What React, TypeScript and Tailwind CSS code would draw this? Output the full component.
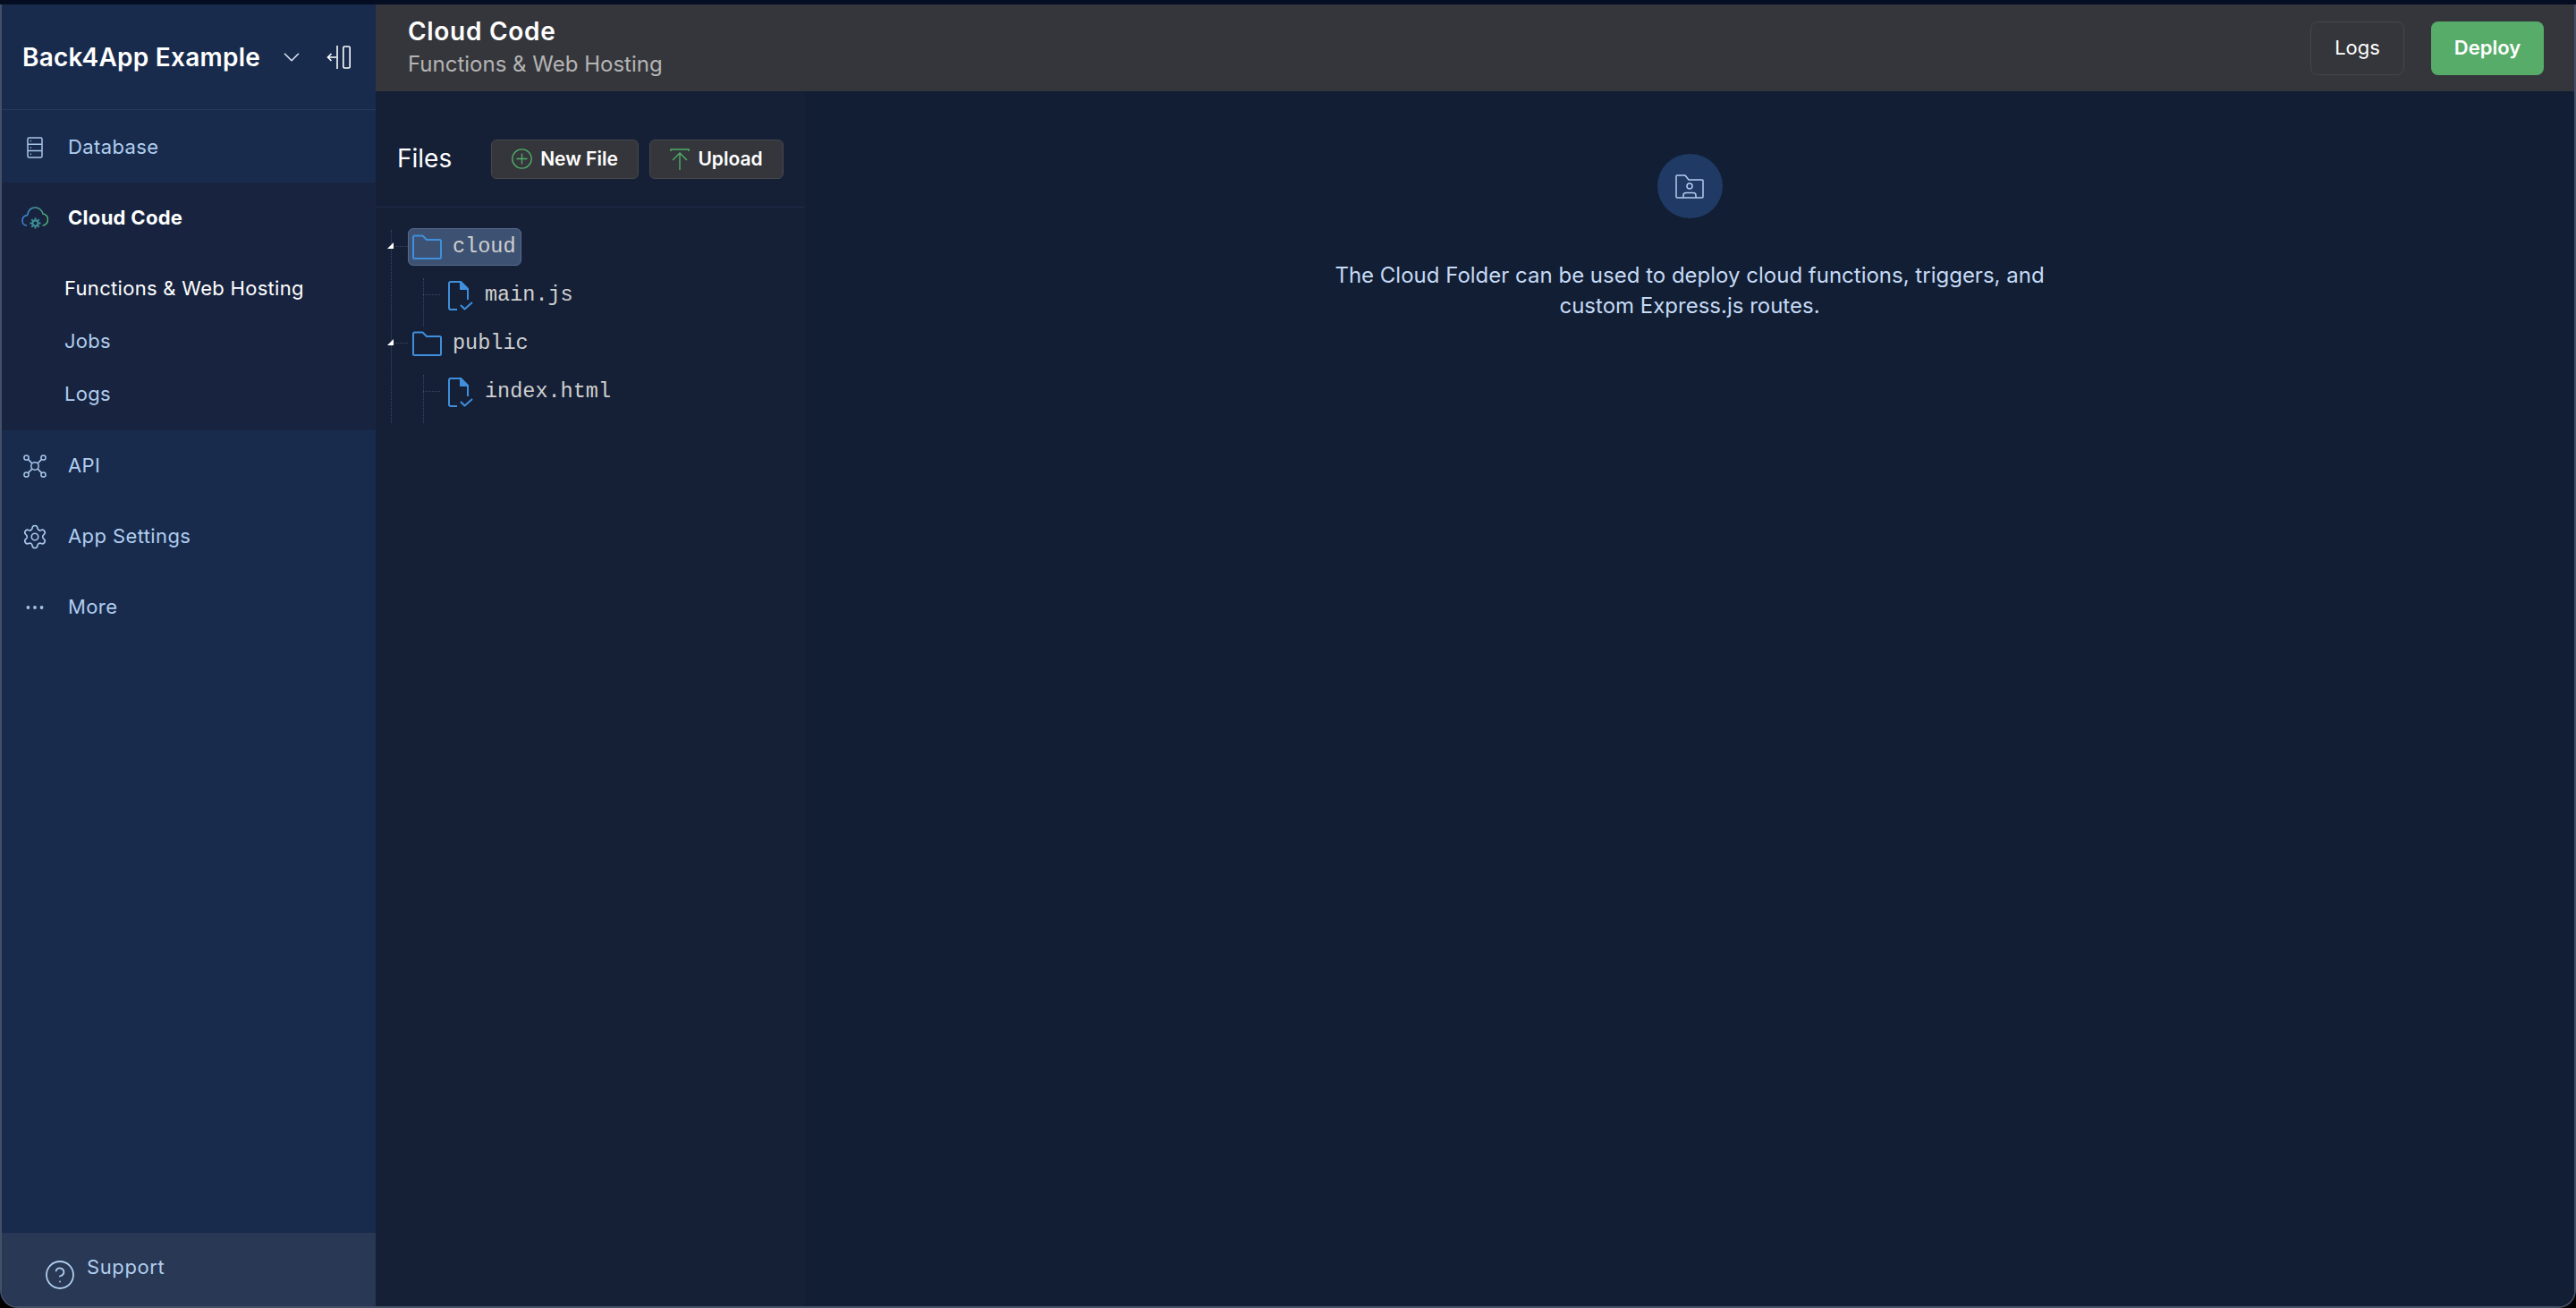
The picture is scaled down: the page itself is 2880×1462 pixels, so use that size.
import React from 'react';
import { ChevronDown, CircleHelp, Ellipsis, Settings } from 'lucide-react';

const sora = "font-['Inter','Noto_Sans',sans-serif]";

const DatabaseIcon = () => (
  <svg width="18" height="24" viewBox="0 0 18 24" fill="none" stroke="#a8c6ea" strokeWidth="1.5">
    <rect x="1" y="1" width="16" height="22" rx="1.5" />
    <path d="M1 8.300h16M1 15.600h16M4 4.600h1M4 12h1M4 19.300h1" />
  </svg>
);

const CloudGearIcon = () => (
  <svg width="30" height="25" viewBox="0 0 30 25" fill="none" strokeWidth="1.600">
    <defs>
      <linearGradient id="cg" x1="0" y1="0" x2="1" y2="0">
        <stop offset="0" stopColor="#3b82d6" />
        <stop offset="1" stopColor="#4fae6b" />
      </linearGradient>
    </defs>
    <path d="M6 21C2.500 21 1 18 1 15.500 1 12 3.500 10 6.500 9.500 7.500 4 11 1 15.500 1 19.500 1 23 4 24 8c3 .5 5.500 3 5.500 6.500S27 21 23.500 21" stroke="url(#cg)" />
    <circle cx="15.500" cy="18.500" r="3" stroke="#3d8f96" strokeWidth="2" />
    <path d="M15.500 12.500v2.500M15.500 22v2.500M9.500 18.500H12M19 18.500h2.500M11.300 14.300l1.800 1.800M17.900 20.900l1.800 1.800M19.700 14.300l-1.800 1.800M13.100 20.900l-1.800 1.800" stroke="#3d8f96" strokeWidth="2" />
  </svg>
);

const ApiIcon = () => (
  <svg width="26" height="26" viewBox="0 0 26 26" fill="none" stroke="#a8c6ea" strokeWidth="1.500">
    <circle cx="13" cy="13" r="4.200" />
    <circle cx="3.500" cy="3.500" r="2.600" />
    <circle cx="22.500" cy="3.500" r="2.600" />
    <circle cx="3.500" cy="22.500" r="2.600" />
    <circle cx="22.500" cy="22.500" r="2.600" />
    <path d="M5.400 5.400l4.700 4.700M20.600 5.400l-4.700 4.700M5.400 20.600l4.700-4.700M20.600 20.600l-4.700-4.700" />
  </svg>
);

const CollapseIcon = () => (
  <svg width="27" height="26" viewBox="0 0 27 26" fill="none" stroke="#ffffff" strokeWidth="1.600">
    <path d="M12 0v26M1 13h10M5.500 9L1.500 13l4 4" />
    <rect x="18.800" y="1" width="7.400" height="24" rx="1.500" />
  </svg>
);

const FolderIcon = () => (
  <svg width="33" height="28" viewBox="0 0 33 28" fill="none" stroke="#3f8fdc" strokeWidth="2" strokeLinejoin="round">
    <path d="M1 3a1.500 1.500 0 0 1 1.500-1.500h9L16 6h14.500A1.500 1.500 0 0 1 32 7.500v18a1.500 1.500 0 0 1-1.500 1.500h-28A1.500 1.500 0 0 1 1 25.500z" />
  </svg>
);

const FileCheckIcon = () => (
  <svg width="28" height="33" viewBox="0 0 28 33" fill="none" stroke="#3f8fdc" strokeWidth="2" strokeLinejoin="round">
    <path d="M10 32H3a2 2 0 0 1-2-2V3a2 2 0 0 1 2-2h11l8 8v12" />
    <path d="M14 1v8h8z" fill="#3f8fdc" />
    <path d="M14 27l4.500 4.500L27 24" />
  </svg>
);

const FolderUserIcon = () => (
  <svg width="32" height="27" viewBox="0 0 32 27" fill="none" stroke="#b4cdee" strokeWidth="1.500">
    <path d="M1 2a1 1 0 0 1 1-1h9l4 5h15a1 1 0 0 1 1 1v18a1 1 0 0 1-1 1H2a1 1 0 0 1-1-1z" strokeLinejoin="round" />
    <circle cx="16" cy="13" r="3" />
    <path d="M9 26v-2.500a3 3 0 0 1 3-3h8a3 3 0 0 1 3 3V26" />
  </svg>
);

const NewFileIcon = () => (
  <svg width="23" height="23" viewBox="0 0 23 23" fill="none" stroke="#4fae6b" strokeWidth="1.300">
    <circle cx="11.500" cy="11.500" r="10.700" />
    <path d="M11.500 5.500v12M5.500 11.500h12" />
  </svg>
);

const UploadIcon = () => (
  <svg width="22" height="24" viewBox="0 0 22 24" fill="none" stroke="#4fae6b" strokeWidth="1.400">
    <path d="M1 3V1h20v2M11 24V6M3 13l8-8 8 8" />
  </svg>
);

const NavItem = ({ icon, label, active }: { icon: React.ReactNode; label: string; active?: boolean }) => (
  <div className="flex h-[79px] items-center">
    <div className="flex w-[74px] justify-center">{icon}</div>
    <span className={`${sora} text-[22px] ${active ? 'font-bold tracking-[0.3px] text-white' : 'tracking-[0.4px] text-[#b0cdee]'}`}>{label}</span>
  </div>
);

const SubItem = ({ label, active }: { label: string; active?: boolean }) => (
  <div className={`${sora} flex h-[59px] items-center pl-[70px] text-[22px] tracking-[0.3px] ${active ? 'text-white' : 'text-[#b0cdee]'}`}>
    {label}
  </div>
);

const TreeRow = ({ indent, icon, label, selected, marker }: { indent?: boolean; icon: React.ReactNode; label: string; selected?: boolean; marker?: boolean }) => (
  <div className={`relative flex h-[54px] items-center ${indent ? 'pl-[76px]' : 'pl-[36px]'}`}>
    {marker && (
      <>
        <div className="absolute left-[17px] top-[26px] w-[19px] border-t border-dotted border-[#3a4866]" />
        <div className="absolute left-[13px] top-[22px] h-0 w-0 border-b-[7px] border-l-[7px] border-b-white border-l-transparent" />
      </>
    )}
    {indent && <div className="absolute left-[53px] top-[26px] w-[19px] border-t border-dotted border-[#3a4866]" />}
    <div className={`flex h-[42px] items-center rounded-[6px] border pl-[4px] pr-[5px] ${selected ? 'border-[#56698a] bg-[#3d5273]' : 'border-transparent'}`}>
      <div className={`flex items-center ${indent ? 'w-[41px]' : 'w-[45px]'}`}>{icon}</div>
      <span className="font-['Liberation_Mono',monospace] text-[23.5px] text-[#cfcfcf]">{label}</span>
    </div>
  </div>
);

export default function App() {
  return (
    <div className="flex h-[1462px] w-[2880px] flex-col overflow-hidden bg-black">
      <div className="h-[5px] shrink-0 bg-[#050d22]" />
      <div className="flex min-h-0 flex-1 overflow-hidden rounded-b-[20px] border-x-2 border-b-2 border-[#454f68]">
        <aside className="flex w-[418px] shrink-0 flex-col bg-[#182b4d]">
          <div className="flex h-[118px] shrink-0 items-center border-b border-[#27395c] pl-[23px]">
            <span className={`${sora} w-[286px] text-[28px] font-semibold tracking-[0.25px] text-white`}>Back4App Example</span>
            <ChevronDown className="h-[30px] w-[30px] text-[#d8e2f0]" strokeWidth={1.3} />
            <div className="ml-[24px]"><CollapseIcon /></div>
          </div>
          <div className="h-[2px] shrink-0" />
          <NavItem icon={<DatabaseIcon />} label="Database" />
          <div className="bg-[#18243f] pb-[11px]">
            <NavItem icon={<CloudGearIcon />} label="Cloud Code" active />
            <div className="pt-[10px]">
              <SubItem label="Functions & Web Hosting" active />
              <SubItem label="Jobs" />
              <SubItem label="Logs" />
            </div>
          </div>
          <NavItem icon={<ApiIcon />} label="API" />
          <NavItem icon={<Settings className="h-[30px] w-[30px] text-[#a8c6ea]" strokeWidth={1.3} />} label="App Settings" />
          <NavItem icon={<Ellipsis className="h-[26px] w-[26px] text-[#a8c6ea]" strokeWidth={1.5} />} label="More" />
          <div className="mt-auto flex h-[82px] items-center bg-[#283855] pl-[47px]">
            <CircleHelp className="mt-[12px] h-[36px] w-[36px] text-[#b0cdee]" strokeWidth={1.2} />
            <span className={`${sora} mb-[6px] ml-[12px] text-[22px] tracking-[0.6px] text-[#b0cdee]`}>Support</span>
          </div>
        </aside>
        <main className="flex min-w-0 flex-1 flex-col bg-[#121e33]">
          <header className="flex h-[97px] shrink-0 items-center justify-between bg-[#35363b] pl-[36px] pr-[34px]">
            <div>
              <div className={`${sora} text-[28px] font-semibold leading-[36px] tracking-[0.7px] text-white`}>Cloud Code</div>
              <div className="font-['Inter',sans-serif] text-[24px] leading-[38px] text-[#b4b4b4]">Functions &amp; Web Hosting</div>
            </div>
            <div className="flex gap-[30px]">
              <button className={`${sora} h-[60px] w-[105px] rounded-[8px] border border-[#45464b] text-[22px] text-white`}>Logs</button>
              <button className={`${sora} h-[60px] w-[126px] rounded-[8px] bg-[#57ac6a] text-[22px] font-semibold text-white`}>Deploy</button>
            </div>
          </header>
          <div className="flex min-h-0 flex-1">
            <section className="w-[480px] shrink-0 bg-[#152037]">
              <div className="flex h-[130px] items-center border-b border-[#202c47] pl-[24px] pt-[22px]">
                <span className="mb-[2px] w-[105px] font-['Inter',sans-serif] text-[28px] text-white">Files</span>
                <button className="flex h-[44px] w-[165px] items-center justify-center gap-[9px] rounded-[6px] border border-[#46474c] bg-[#35363b] font-['Inter',sans-serif] text-[21px] font-semibold text-white">
                  <NewFileIcon />
                  New File
                </button>
                <button className="ml-[12px] flex h-[44px] w-[150px] items-center justify-center gap-[9px] rounded-[6px] border border-[#46474c] bg-[#35363b] font-['Inter',sans-serif] text-[21px] font-semibold text-white">
                  <UploadIcon />
                  Upload
                </button>
              </div>
              <div className="relative pt-[17px]">
                <div className="absolute left-[17px] top-[25px] h-[216px] border-l border-dotted border-[#3a4866]" />
                <div className="absolute left-[53px] top-[79px] h-[54px] border-l border-dotted border-[#3a4866]" />
                <div className="absolute left-[53px] top-[187px] h-[54px] border-l border-dotted border-[#3a4866]" />
                <TreeRow marker selected icon={<FolderIcon />} label="cloud" />
                <TreeRow indent icon={<FileCheckIcon />} label="main.js" />
                <TreeRow marker icon={<FolderIcon />} label="public" />
                <TreeRow indent icon={<FileCheckIcon />} label="index.html" />
              </div>
            </section>
            <section className="flex flex-1 flex-col items-center bg-[#121e33] pt-[70px]">
              <div className="flex h-[72px] w-[73px] items-center justify-center rounded-full bg-[#203a66]">
                <FolderUserIcon />
              </div>
              <p className="mt-[47px] w-[860px] text-center font-['Inter',sans-serif] text-[24px] leading-[34px] text-[#c5daf5]">
                The Cloud Folder can be used to deploy cloud functions, triggers, and custom Express.js routes.
              </p>
            </section>
          </div>
        </main>
      </div>
    </div>
  );
}
